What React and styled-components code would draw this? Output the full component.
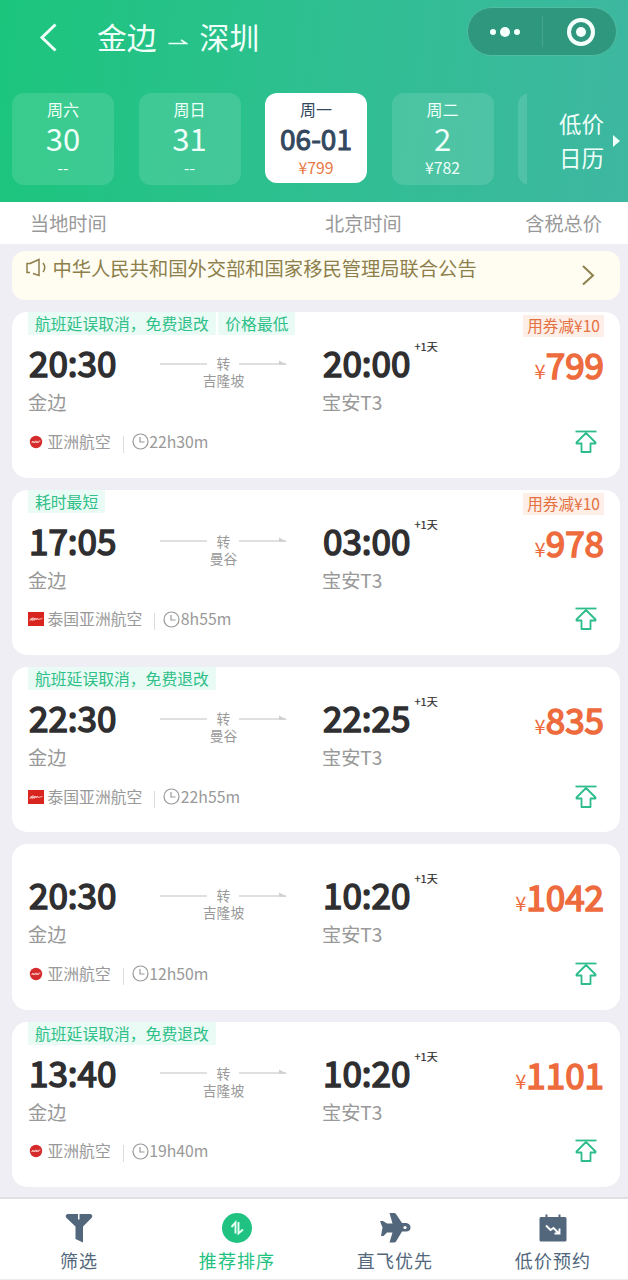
import styled, { createGlobalStyle, ThemeProvider } from 'styled-components'

const theme = {
  colors: {
    page: '#eeeef4',
    green: '#1fc281',
    tagText: '#2fbf88',
    tagBg: '#e9fbf4',
    orange: '#ed6b3d',
    dark: '#2f2f31',
    grey: '#999999',
    slate: '#52677c',
    notice: '#8d7f4c',
  },
}

const GlobalStyle = createGlobalStyle`
  * {
    box-sizing: border-box;
  }
  body {
    margin: 0;
    font-family: 'Noto Sans CJK SC', sans-serif;
    background: #eeeef4;
  }
`

const Page = styled.div`
  display: flex;
  flex-direction: column;
  width: 628px;
  height: 1280px;
  overflow: hidden;
  background: ${({ theme }) => theme.colors.page};
`

const Header = styled.header`
  flex: none;
  height: 202px;
  background: linear-gradient(97deg, #1bc57c 0%, #2dc08f 45%, #3eb7a1 100%);
  color: #effff9;
`

const TitleBar = styled.div`
  display: flex;
  align-items: center;
  height: 93px;
  padding: 0 11px 18px 38px;
`

const BackIcon = styled.svg`
  width: 20px;
  height: 30px;
  margin-right: 39px;
`

const Title = styled.h1`
  display: flex;
  align-items: center;
  flex: 1;
  margin: -3px 0 0;
  font-size: 29.8px;
  font-weight: 400;
  line-height: 36px;
`

const TitleArrow = styled.svg`
  width: 20px;
  height: 10px;
  margin: 12px 12px 0 11px;
`

const Capsule = styled.div`
  display: flex;
  align-items: center;
  width: 150px;
  height: 49px;
  margin-top: -12px;
  border: 1px solid #4fbd9f;
  border-radius: 25px;
  background: #2e977d;
`

const CapsuleHalf = styled.div`
  display: flex;
  flex: 1;
  align-items: center;
  justify-content: center;
  height: 31px;
  gap: 4px;
  border-left: ${({ $divided }) => ($divided ? '1px solid #45a68d' : 'none')};
`

const Dot = styled.span`
  width: ${({ $size }) => $size}px;
  height: ${({ $size }) => $size}px;
  border-radius: 50%;
  background: #f4fffb;
`

const Ring = styled.span`
  display: flex;
  align-items: center;
  justify-content: center;
  width: 28px;
  height: 28px;
  margin-left: 4px;
  border: 4px solid #f4fffb;
  border-radius: 50%;
`

const DateBar = styled.div`
  display: flex;
  padding-left: 12px;
`

const DateList = styled.div`
  display: flex;
  gap: 24.5px;
  width: 515px;
  overflow: hidden;
`

const DateCard = styled.div`
  flex: none;
  display: flex;
  flex-direction: column;
  align-items: center;
  width: 102px;
  height: ${({ $active }) => ($active ? 90 : 92)}px;
  padding-top: 5px;
  border-radius: 12px;
  background: ${({ $active }) => ($active ? '#ffffff' : 'rgba(255, 255, 255, 0.12)')};
  color: ${({ $active }) => ($active ? '#33475d' : '#effff9')};
`

const Weekday = styled.span`
  font-size: 16px;
  line-height: 23px;
`

const Day = styled.span`
  font-size: ${({ $active }) => ($active ? 28 : 31)}px;
  -webkit-text-stroke: ${({ $active }) => ($active ? 1 : 0)}px;
  line-height: 34px;
`

const DayPrice = styled.span`
  font-size: 15.8px;
  line-height: 25px;
  color: ${({ $active }) => ($active ? '#e87945' : 'inherit')};
`

const CalendarLink = styled.div`
  display: flex;
  align-items: center;
  width: 101px;
  height: 94px;
  padding-left: 32px;
  gap: 9px;
  font-size: 22.5px;
  line-height: 34px;
`

const Caret = styled.span`
  margin-top: 2px;
  border-top: 6px solid transparent;
  border-bottom: 6px solid transparent;
  border-left: 7px solid #effff9;
`

const ColumnHeads = styled.div`
  flex: none;
  display: flex;
  height: 42px;
  padding: 0 26px 0 30px;
  background: #fff;
  color: ${({ theme }) => theme.colors.grey};
  font-size: 19.2px;
  line-height: 42px;
`

const ColumnHead = styled.span`
  width: ${({ $width }) => ($width ? `${$width}px` : 'auto')};
  margin-left: ${({ $end }) => ($end ? 'auto' : 0)};
`

const Notice = styled.div`
  flex: none;
  display: flex;
  height: 49px;
  margin: 7px 8px 0 12px;
  padding: 0 25px 0 13px;
  border-radius: 13px;
  background: #fffdf1;
  color: ${({ theme }) => theme.colors.notice};
`

const SpeakerIcon = styled.svg`
  width: 22px;
  height: 20px;
  margin: 7px 5.5px 0 0;
`

const NoticeText = styled.span`
  flex: 1;
  font-size: 19.3px;
  line-height: 34px;
`

const ChevronIcon = styled.svg`
  width: 14px;
  height: 22px;
  margin-top: 13px;
`

const FlightList = styled.div`
  display: flex;
  flex-direction: column;
  flex: 1;
  gap: 12px;
  padding: 12.3px 8px 0 12px;
`

const FlightCard = styled.article`
  flex: none;
  height: 165.4px;
  padding: 0 16px;
  border-radius: 15px;
  background: #fff;
`

const TagRow = styled.div`
  display: flex;
  gap: 2.5px;
  height: 31px;
  align-items: flex-start;
`

const Tag = styled.span`
  height: 23px;
  padding: 0 7px;
  background: ${({ theme }) => theme.colors.tagBg};
  color: ${({ theme }) => theme.colors.tagText};
  font-size: 15.8px;
  line-height: 23px;
`

const Coupon = styled.span`
  height: 22px;
  margin: 3px 0 0 auto;
  padding: 0 4px;
  background: #fdeee8;
  color: #e4713f;
  font-size: 15.6px;
  line-height: 20px;
`

const MainRow = styled.div`
  display: flex;
  height: 72px;
`

const Stop = styled.div`
  width: ${({ $width }) => $width}px;
`

const Time = styled.div`
  display: flex;
  height: 40px;
  padding-left: 1px;
  color: ${({ theme }) => theme.colors.dark};
  font-size: 35px;
  -webkit-text-stroke: 1.6px;
  line-height: 38px;
`

const NextDay = styled.sup`
  margin-left: 4px;
  font-size: 11px;
  -webkit-text-stroke: 0.2px;
  line-height: 7px;
`

const Place = styled.div`
  font-size: 19.2px;
  line-height: 38px;
  color: ${({ theme }) => theme.colors.grey};
`

const Route = styled.div`
  width: 127px;
  margin-right: 35px;
  padding-top: 12px;
  color: ${({ theme }) => theme.colors.grey};
  font-size: 13.8px;
  line-height: 17px;
  text-align: center;
`

const RouteLine = styled.div`
  display: flex;
  align-items: center;
  justify-content: space-between;
`

const Dash = styled.svg`
  width: 48px;
  height: 8px;
`

const Price = styled.div`
  flex: 1;
  color: ${({ theme }) => theme.colors.orange};
  font-size: 35px;
  -webkit-text-stroke: 1.6px;
  line-height: 42px;
  text-align: right;
`

const Currency = styled.span`
  font-size: 20px;
  -webkit-text-stroke: 0;
`

const InfoRow = styled.div`
  display: flex;
  align-items: center;
  height: 53px;
  color: ${({ theme }) => theme.colors.grey};
  font-size: 15.8px;
  line-height: 24px;
`

const AirlineLogo = styled.svg`
  width: 16px;
  height: 16px;
  margin-right: 3.5px;
`

const Divider = styled.span`
  width: 1px;
  height: 17px;
  margin: 5px 8px 0 12px;
  background: #dcdcdc;
`

const ClockIcon = styled.svg`
  width: 17px;
  height: 17px;
  margin-right: 0.5px;
`

const PinIcon = styled.svg`
  width: 22px;
  height: 23px;
  margin: -1px 7px 0 auto;
`

const TabBar = styled.nav`
  flex: none;
  display: flex;
  height: 83px;
  border-top: 2px solid #dfdfe6;
  border-bottom: 1px solid #ececf0;
  background: #fff;
`

const Tab = styled.div`
  display: flex;
  flex: none;
  flex-direction: column;
  align-items: center;
  width: 158px;
  padding-top: 13px;
  color: ${({ theme, $active }) => ($active ? theme.colors.green : theme.colors.slate)};
  font-size: 18px;
  letter-spacing: 1.1px;
  line-height: 32px;
`

const TabIcon = styled.svg`
  width: 32px;
  height: 32px;
`

const dates = [
  { weekday: '周六', day: '30', price: '--' },
  { weekday: '周日', day: '31', price: '--' },
  { weekday: '周一', day: '06-01', price: '¥799', active: true },
  { weekday: '周二', day: '2', price: '¥782' },
  {},
]

const flights = [
  { tags: ['航班延误取消，免费退改', '价格最低'], coupon: true, dep: '20:30', arr: '20:00', via: '吉隆坡', airline: '亚洲航空', duration: '22h30m', price: 799 },
  { tags: ['耗时最短'], coupon: true, dep: '17:05', arr: '03:00', via: '曼谷', airline: '泰国亚洲航空', thai: true, duration: '8h55m', price: 978 },
  { tags: ['航班延误取消，免费退改'], dep: '22:30', arr: '22:25', via: '曼谷', airline: '泰国亚洲航空', thai: true, duration: '22h55m', price: 835 },
  { tags: [], dep: '20:30', arr: '10:20', via: '吉隆坡', airline: '亚洲航空', duration: '12h50m', price: 1042 },
  { tags: ['航班延误取消，免费退改'], dep: '13:40', arr: '10:20', via: '吉隆坡', airline: '亚洲航空', duration: '19h40m', price: 1101 },
]

const Logo = ({ thai }) => (
  <AirlineLogo viewBox="0 0 16 16" fill="none">
    {thai ? <rect y="1" width="16" height="14" fill="#d9251f" /> : <circle cx="8" cy="8" r="6.2" fill="#d62b2d" />}
    <path
      d={
        thai
          ? 'M1.5 9.5l2-2.5-.5 2.5 2-3-.5 3 2-2.5-.4 2.5 1.7-2.5.2 2 1.5-2 .4 1.5 4.5-1'
          : 'M3.5 9l1.3-2 .3 2 1-1.6.5 1.6 1.5-2.2.2 2.2 1-1.7.7 1.7 1-2h1.5'
      }
      stroke="#f7c9c5"
      strokeWidth="0.9"
    />
  </AirlineLogo>
)

const Flight = ({ flight }) => (
  <FlightCard>
    <TagRow>
      {flight.tags.map((tag) => (
        <Tag key={tag}>{tag}</Tag>
      ))}
      {flight.coupon && <Coupon>用券减¥10</Coupon>}
    </TagRow>
    <MainRow>
      <Stop $width={132}>
        <Time>{flight.dep}</Time>
        <Place>金边</Place>
      </Stop>
      <Route>
        <RouteLine>
          <Dash viewBox="0 0 48 8">
            <path d="M0 4h47" stroke="#d6d6d6" strokeWidth="1.5" />
          </Dash>
          转
          <Dash viewBox="0 0 48 8">
            <path d="M0 4h47" stroke="#d6d6d6" strokeWidth="1.5" />
            <path d="M40 0.5l8 4.2h-8z" fill="#d0d0d0" />
          </Dash>
        </RouteLine>
        {flight.via}
      </Route>
      <Stop $width={130}>
        <Time>
          {flight.arr}
          <NextDay>+1天</NextDay>
        </Time>
        <Place>宝安T3</Place>
      </Stop>
      <Price>
        <Currency>¥</Currency>
        {flight.price}
      </Price>
    </MainRow>
    <InfoRow>
      <Logo thai={flight.thai} />
      {flight.airline}
      <Divider />
      <ClockIcon viewBox="0 0 17 17" fill="none" stroke="#999" strokeWidth="1.2">
        <circle cx="8.5" cy="8.5" r="7.5" />
        <path d="M8 4v5h4.5" />
      </ClockIcon>
      {flight.duration}
      <PinIcon viewBox="0 0 22 23" fill="none" stroke="#2dbd8b" strokeWidth="1.8">
        <path d="M0.5 1.5h21" />
        <path d="M11 3L1.5 12.500v1h5v8.500h9v-8.500h5v-1z" strokeLinejoin="round" />
      </PinIcon>
    </InfoRow>
  </FlightCard>
)

const App = () => {
  return (
    <ThemeProvider theme={theme}>
      <GlobalStyle />
      <Page>
        <Header>
          <TitleBar>
            <BackIcon viewBox="0 0 20 30" fill="none" stroke="#effff9" strokeWidth="3">
              <path d="M17.5 1.5L4 14.500l13.500 13" />
            </BackIcon>
            <Title>
              金边
              <TitleArrow viewBox="0 0 20 10" fill="none" stroke="#effff9" strokeWidth="1.5">
                <path d="M0.5 6.5h18l-5.5-3.500" />
              </TitleArrow>
              深圳
            </Title>
            <Capsule>
              <CapsuleHalf>
                <Dot $size={6} />
                <Dot $size={10} />
                <Dot $size={6} />
              </CapsuleHalf>
              <CapsuleHalf $divided>
                <Ring>
                  <Dot $size={10} />
                </Ring>
              </CapsuleHalf>
            </Capsule>
          </TitleBar>
          <DateBar>
            <DateList>
              {dates.map((item, i) => (
                <DateCard key={i} $active={item.active}>
                  <Weekday>{item.weekday}</Weekday>
                  <Day $active={item.active}>{item.day}</Day>
                  <DayPrice $active={item.active}>{item.price}</DayPrice>
                </DateCard>
              ))}
            </DateList>
            <CalendarLink>
              <span>
                低价
                <br />
                日历
              </span>
              <Caret />
            </CalendarLink>
          </DateBar>
        </Header>
        <ColumnHeads>
          <ColumnHead $width={295}>当地时间</ColumnHead>
          <ColumnHead>北京时间</ColumnHead>
          <ColumnHead $end>含税总价</ColumnHead>
        </ColumnHeads>
        <Notice>
          <SpeakerIcon viewBox="0 0 22 20" fill="none" stroke="#8d7f4c" strokeWidth="1.5">
            <path d="M6 5.5H2v9H5M5 5.5L14 1.500v16L8 15.500" />
            <path d="M18 5q3.5 4.500 0 9" />
          </SpeakerIcon>
          <NoticeText>中华人民共和国外交部和国家移民管理局联合公告</NoticeText>
          <ChevronIcon viewBox="0 0 14 22" fill="none" stroke="#8d7f4c" strokeWidth="2">
            <path d="M2 2l10 9.5-10 9" />
          </ChevronIcon>
        </Notice>
        <FlightList>
          {flights.map((flight, i) => (
            <Flight key={i} flight={flight} />
          ))}
        </FlightList>
        <TabBar>
          <Tab>
            <TabIcon viewBox="0 0 32 32" fill="#52677c">
              <path d="M4.5 2H15v5.500h1.500V2H27.500q3 1 1 4L20 14.500V30.500l-7.500-3.500V14.500L3.500 6q-2-3 1-4z" />
            </TabIcon>
            筛选
          </Tab>
          <Tab $active>
            <TabIcon viewBox="0 0 32 32" fill="none">
              <circle cx="16" cy="16" r="15" fill="#1fc281" />
              <path d="M10.5 15l4-4.500v11M17.500 10v11.500l4.500-4" stroke="#e9fff6" strokeWidth="1.9" />
            </TabIcon>
            推荐排序
          </Tab>
          <Tab>
            <TabIcon viewBox="0 0 32 32">
              <path
                d="M10.5 1h4.500q1.500 0 2 1l6 9H27q4.500 .5 4.500 4.500T27 19.500h-4L17 29.500q-.5 1-2 1h-4.500l3-10H8l-3.500 3.500H2L3.500 15.500 1 9h3l4 2.500h5.500z"
                fill="#52677c"
              />
              <circle cx="26" cy="15.500" r="1.600" fill="#fff" />
            </TabIcon>
            直飞优先
          </Tab>
          <Tab>
            <TabIcon viewBox="0 0 32 32" fill="none">
              <path d="M4 5h4.500V2.500h2V5h11V2.500h2V5H28q1.500 0 1.500 1.500V28q0 1.500-1.500 1.500H4q-1.500 0-1.500-1.500V6.500Q2.500 5 4 5z" fill="#52677c" />
              <path d="M9 13.500l4.500 4.500 3-2 5.500 5.500M22.500 16.500v5h-5" stroke="#fff" strokeWidth="1.9" />
            </TabIcon>
            低价预约
          </Tab>
        </TabBar>
      </Page>
    </ThemeProvider>
  )
}

export default App
